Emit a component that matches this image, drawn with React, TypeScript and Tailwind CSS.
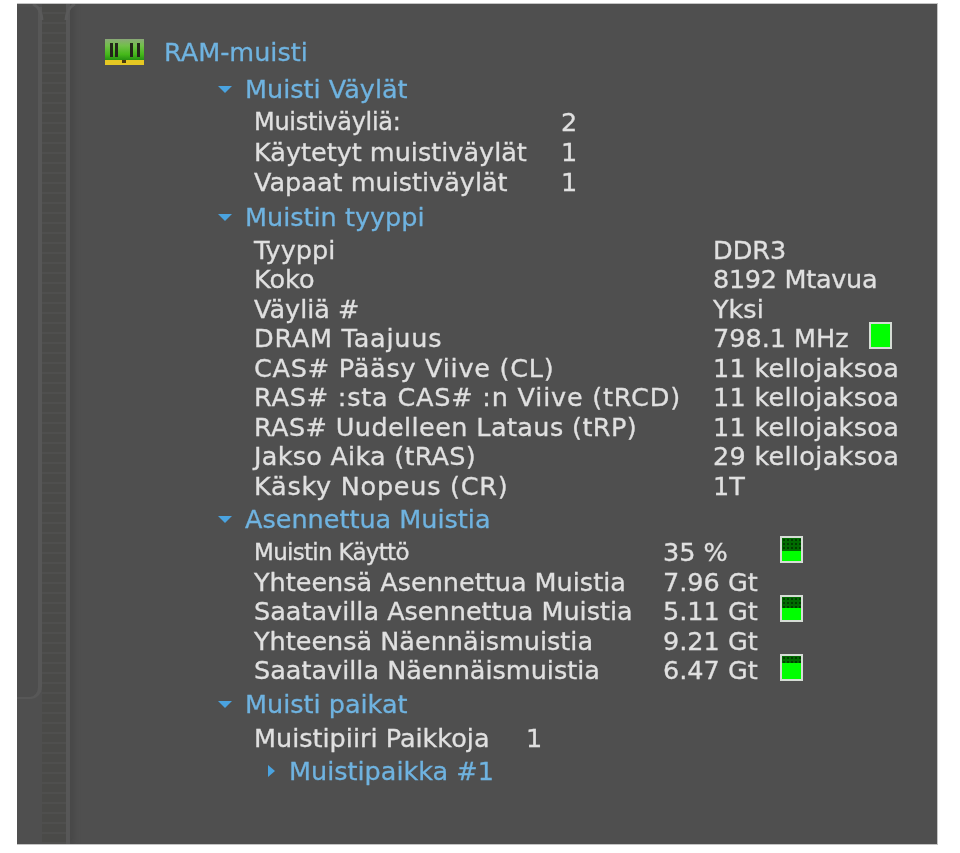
type Row = { label: string; value: string; meter?: string; track?: string; valueTrack?: string };

const sections: { title: string; col: string; rowH: string; gap: string; rows: Row[] }[] = [
  {
    title: "Muisti Väylät",
    col: "grid-cols-[307px_1fr]",
    rowH: "h-[30px]",
    gap: "mb-[4.5px]",
    rows: [
      { label: "Muistiväyliä:", value: "2", track: "text-[24px] tracking-[-0.3px]" },
      { label: "Käytetyt muistiväylät", value: "1" },
      { label: "Vapaat muistiväylät", value: "1" },
    ],
  },
  {
    title: "Muistin tyyppi",
    col: "grid-cols-[459px_1fr]",
    rowH: "h-[29.5px]",
    gap: "mb-[4px]",
    rows: [
      { label: "Tyyppi", value: "DDR3" },
      { label: "Koko", value: "8192 Mtavua", valueTrack: "tracking-[-0.3px]" },
      { label: "Väyliä #", value: "Yksi" },
      { label: "DRAM Taajuus", value: "798.1 MHz", meter: "solid", track: "tracking-[0.75px]" },
      { label: "CAS# Pääsy Viive (CL)", value: "11 kellojaksoa", track: "tracking-[0.75px]", valueTrack: "tracking-[0.3px]" },
      { label: "RAS# :sta CAS# :n Viive (tRCD)", value: "11 kellojaksoa", track: "tracking-[0.8px]", valueTrack: "tracking-[0.3px]" },
      { label: "RAS# Uudelleen Lataus (tRP)", value: "11 kellojaksoa", track: "tracking-[0.4px]", valueTrack: "tracking-[0.3px]" },
      { label: "Jakso Aika (tRAS)", value: "29 kellojaksoa", track: "tracking-[0.25px]", valueTrack: "tracking-[0.3px]" },
      { label: "Käsky Nopeus (CR)", value: "1T", track: "tracking-[0.75px]" },
    ],
  },
  {
    title: "Asennettua Muistia",
    col: "grid-cols-[409px_1fr]",
    rowH: "h-[29.5px]",
    gap: "mb-[4px]",
    rows: [
      { label: "Muistin Käyttö", value: "35 %", meter: "35", track: "text-[23px] tracking-[-0.7px]" },
      { label: "Yhteensä Asennettua Muistia", value: "7.96 Gt" },
      { label: "Saatavilla Asennettua Muistia", value: "5.11 Gt", meter: "25" },
      { label: "Yhteensä Näennäismuistia", value: "9.21 Gt" },
      { label: "Saatavilla Näennäismuistia", value: "6.47 Gt", meter: "15" },
    ],
  },
  {
    title: "Muisti paikat",
    col: "grid-cols-[272px_1fr]",
    rowH: "h-[31px] pt-px",
    gap: "mb-[3px]",
    rows: [{ label: "Muistipiiri Paikkoja", value: "1" }],
  },
];

function Meter({ used }: { used: string }) {
  if (used === "solid") {
    return <span className="absolute left-[156px] top-[-1px] h-[27px] w-[23px] border-2 border-[#d5dcd5] bg-[#00ff00]" />;
  }
  const h = used === "35" ? "h-[13px]" : used === "25" ? "h-[11px]" : "h-[7px]";
  return (
    <span className="absolute left-[117px] top-[-1px] flex h-[27px] w-[23px] flex-col border-2 border-[#d5dcd5] bg-[#00ff00]">
      <span className={`${h} w-full bg-[#006b00] bg-[radial-gradient(#003d00_1px,transparent_1px)] bg-[length:4px_4px]`} />
    </span>
  );
}

function Arrow({ open }: { open: boolean }) {
  return (
    <svg width="14" height="14" viewBox="0 0 14 14" className="shrink-0">
      <path d={open ? "M0 4h14L7 11z" : "M4 1l7 6-7 6z"} fill="#4aa3e0" />
    </svg>
  );
}

function RamIcon() {
  return (
    <svg width="39" height="26" viewBox="0 0 39 26" className="shrink-0">
      <defs>
        <linearGradient id="pcb" x1="0" y1="0" x2="0" y2="1">
          <stop offset="0" stopColor="#8aa878" />
          <stop offset="0.3" stopColor="#72c04a" />
          <stop offset="0.7" stopColor="#45b81a" />
          <stop offset="1" stopColor="#1f8a10" />
        </linearGradient>
      </defs>
      <rect x="0" y="0" width="39" height="22" fill="url(#pcb)" />
      <rect x="5" y="4" width="3" height="14" fill="#23261a" />
      <rect x="10" y="4" width="3" height="14" fill="#23261a" />
      <rect x="25" y="4" width="3" height="14" fill="#23261a" />
      <rect x="32" y="4" width="3" height="14" fill="#23261a" />
      <rect x="0" y="21" width="39" height="5" fill="#e6c823" />
      <rect x="17" y="21" width="4" height="3" fill="#4a3a10" />
    </svg>
  );
}

// curved bands at the top of the rail, where it flares out into the frame
function RailFlare() {
  return (
    <svg width="70" height="16" viewBox="0 0 70 16" className="absolute left-0 top-0" fill="none" stroke="#5a5a5a" strokeWidth="3">
      <path d="M16 0q8 4 9 16" />
      <path d="M58 0q-8 4-9 16" />
    </svg>
  );
}

export default function App() {
  return (
    <div className="h-[853px] w-[960px] bg-white pl-[17px] pt-[3px] font-['DejaVu_Sans',sans-serif] text-[25.5px] leading-[30px] text-[#e0e0e0] [-webkit-text-stroke:0.3px]">
      <div className="relative flex h-[842px] w-[921px] overflow-hidden border border-l-0 border-[#c4c4c4] bg-[#4f4f4f] [filter:blur(0.7px)]">
        <div className="flex w-[53px] shrink-0 border-r-4 border-[#575757] shadow-[4px_0_5px_#484848]">
          <div className="mb-[145px] mt-[3px] w-[25px] rounded-br-xl border-b-2 border-r-4 border-[#575757] bg-[#4d4d4d]" />
          <div className="flex-1 bg-[repeating-linear-gradient(#4a4a48_0px,#4a4a48_8px,#4f4f4e_8px,#4f4f4e_10px)]" />
        </div>
        <RailFlare />
        <div className="flex-1 pl-[35px] pt-[33px]">
          <div className="flex items-center text-[#6fb3e0]">
            <RamIcon />
            <span className="ml-[20px]">RAM-muisti</span>
          </div>
          <div className="ml-[113px] mt-[7px]">
            {sections.map((s) => (
              <div key={s.title} className={s.gap}>
                <div className="flex items-center gap-[13px] text-[#6fb3e0]">
                  <Arrow open />
                  <span>{s.title}</span>
                </div>
                <div className="ml-[36px] mt-[3px]">
                  {s.rows.map((r) => (
                    <div key={r.label} className={`grid ${s.col} ${s.rowH}`}>
                      <span className={`whitespace-nowrap ${r.track ?? ""}`}>{r.label}</span>
                      <span className={`relative flex items-center whitespace-nowrap ${r.valueTrack ?? ""}`}>
                        {r.value}
                        {r.meter && <Meter used={r.meter} />}
                      </span>
                    </div>
                  ))}
                </div>
              </div>
            ))}
            <div className="ml-[46px] flex items-center gap-[11px] text-[#6fb3e0]">
              <Arrow open={false} />
              <span>Muistipaikka #1</span>
            </div>
          </div>
        </div>
      </div>
    </div>
  );
}
